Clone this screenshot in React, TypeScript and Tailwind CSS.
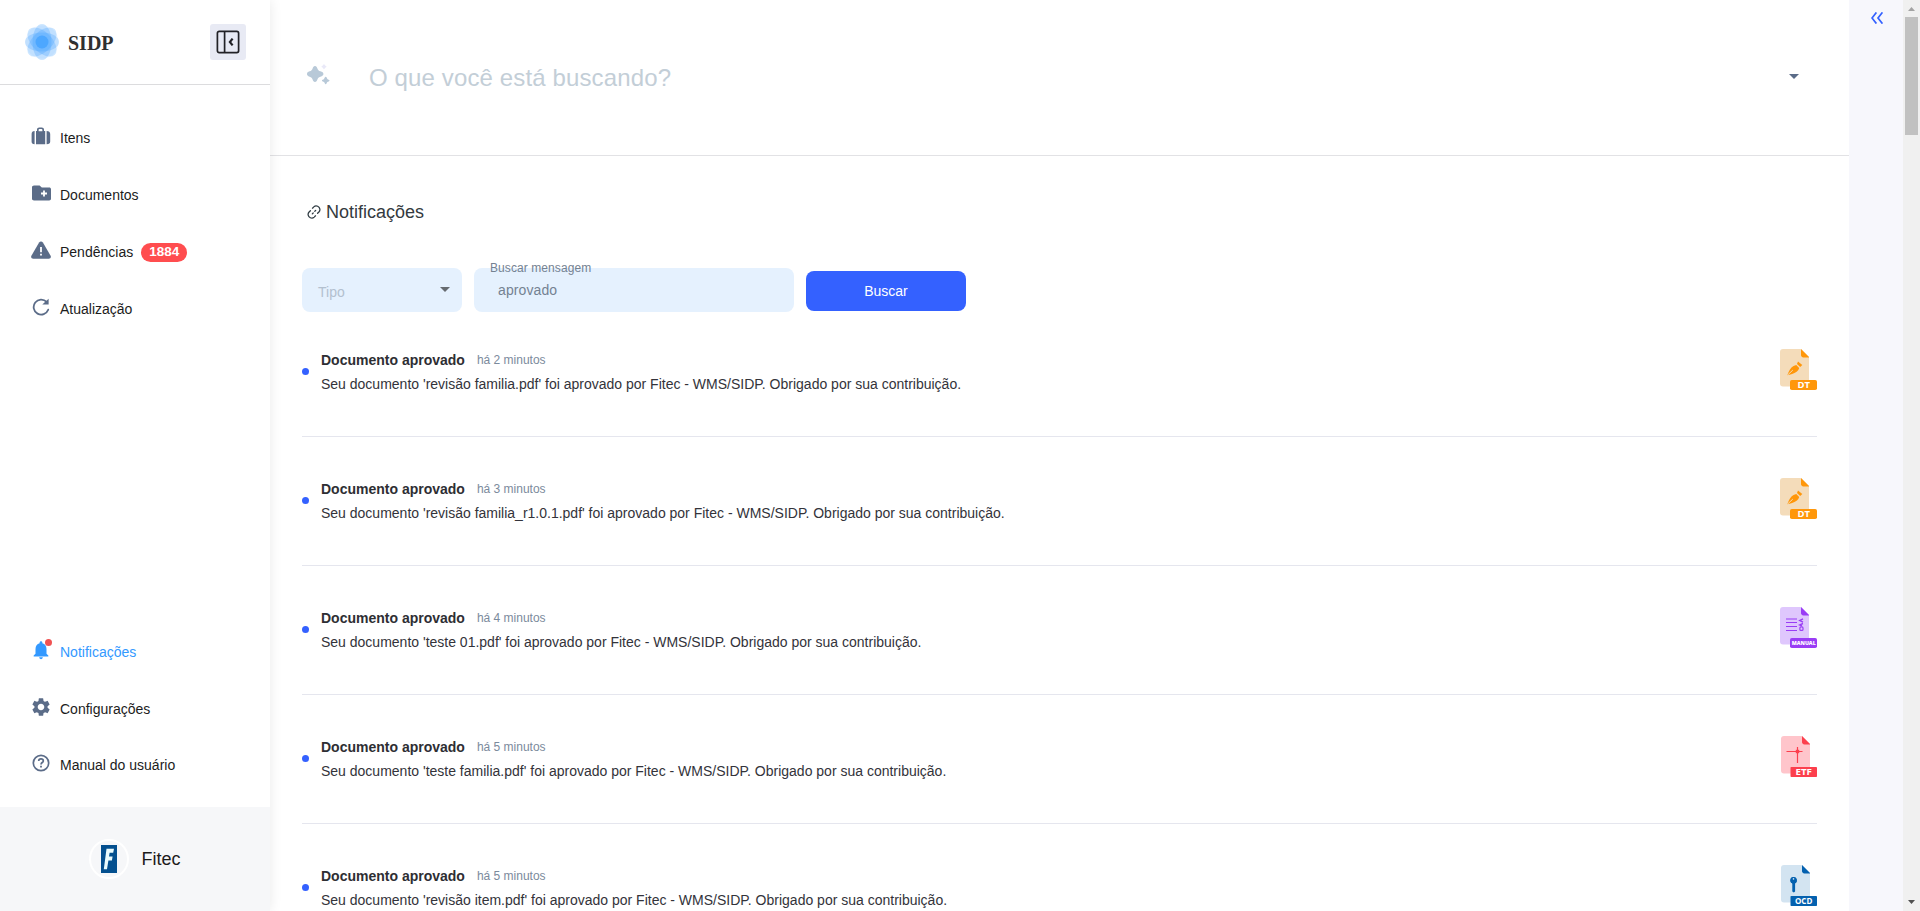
import React from "react";
import { MdNotifications, MdSettings } from "react-icons/md";

type FileKind = "DT" | "MANUAL" | "ETF" | "OCD";

const notifications: { time: string; file: string; kind: FileKind }[] = [
  { time: "há 2 minutos", file: "revisão familia.pdf", kind: "DT" },
  { time: "há 3 minutos", file: "revisão familia_r1.0.1.pdf", kind: "DT" },
  { time: "há 4 minutos", file: "teste 01.pdf", kind: "MANUAL" },
  { time: "há 5 minutos", file: "teste familia.pdf", kind: "ETF" },
  { time: "há 5 minutos", file: "revisão item.pdf", kind: "OCD" },
];

function Logo() {
  return (
    <svg width="34" height="36" viewBox="0 0 34 36" fill="#3a9eff">
      <g fillOpacity="0.26">
        <ellipse cx="17" cy="18" rx="9.500" ry="18" />
        <ellipse cx="17" cy="18" rx="10" ry="18" transform="rotate(45 17 18)" />
        <ellipse cx="17" cy="18" rx="17" ry="9.500" />
        <ellipse cx="17" cy="18" rx="10" ry="18" transform="rotate(-45 17 18)" />
        <circle cx="17" cy="18" r="16.500" fillOpacity="0.08" />
      </g>
      <circle cx="17" cy="18" r="6.500" fillOpacity="0.65" />
    </svg>
  );
}

function ToggleIcon() {
  return (
    <svg width="24" height="24" viewBox="0 0 24 24" fill="none" stroke="#222226" strokeWidth="1.700">
      <rect x="1.400" y="1.400" width="21.200" height="21.200" rx="1.800" />
      <path d="M8.600 1.400v21.200" />
      <path d="M16.600 8.600L13.900 12l2.700 3.400" strokeWidth="2.200" />
    </svg>
  );
}

function SuitcaseIcon() {
  return (
    <svg width="20" height="18" viewBox="0 0 20 18" fill="#5b6c88">
      <path
        d="M6 4V2.600C6 1.300 7 .400 8.200 .400h2.600C12 .400 13 1.300 13 2.600V4h1.200v13.200H5V4zM7.600 4.200h3.800V3c0-.600-.300-.900-.900-.900h-2c-.600 0-.9.300-.9.900z"
        fillRule="evenodd"
      />
      <path d="M3.600 4v13.200C1.500 17.200.6 16.400.6 14.600V7C.6 5 1.600 4 3.600 4zM15.600 4v13.200c2.500 0 3.600-.8 3.600-2.600V7c0-2-1.300-3-3.600-3z" />
    </svg>
  );
}

function FolderIcon() {
  return (
    <svg width="19" height="16" viewBox="0 0 19 16">
      <path d="M2 .500h5.600l2.200 2H17.200c1 0 1.800.700 1.800 1.700v9.600c0 1-.800 1.700-1.800 1.700H2c-1.100 0-2-.700-2-1.700V2.300C0 1.200.900.500 2 .500z" fill="#5b6c88" />
      <path d="M12 5.500v6M9 8.500h6" stroke="#fff" strokeWidth="1.800" />
    </svg>
  );
}

function WarningIcon() {
  return (
    <svg width="20" height="18" viewBox="0 0 20 18">
      <path d="M8.100 1.600c.9-1.500 2.900-1.500 3.800 0l7.700 13.100c.8 1.500-.200 3.100-1.900 3.100H2.300c-1.700 0-2.700-1.600-1.900-3.100z" fill="#5b6c88" />
      <path d="M10 6v5.300M10 12.700v1.900" stroke="#fff" strokeWidth="1.800" />
    </svg>
  );
}

function RefreshIcon() {
  return (
    <svg width="18" height="18" viewBox="0 0 18 18" fill="none" stroke="#5b6c88" strokeWidth="1.800">
      <path d="M16.200 11.700A7.500 7.500 0 1 1 14.600 3.900" strokeLinecap="round" />
      <path d="M16.600.800v5.800h-6.300z" fill="#5b6c88" stroke="none" />
    </svg>
  );
}

function HelpIcon() {
  return (
    <svg width="18" height="18" viewBox="0 0 18 18" fill="none" stroke="#5b6c88">
      <circle cx="9" cy="9" r="7.700" strokeWidth="1.700" />
      <path d="M6.700 7.100c0-1.400 1-2.200 2.300-2.200s2.300.8 2.300 2c0 1.600-2.300 1.700-2.300 3.600" strokeWidth="1.700" />
      <path d="M9 11.800v1.800" strokeWidth="1.800" />
    </svg>
  );
}

function SparkleIcon() {
  return (
    <svg width="24" height="22" viewBox="0 0 24 22" fill="#b8c9d8">
      <path d="M8 2c1.300 0 1.900.9 2.400 2.400.6 1.700 1.200 2.300 3 2.900 2 .6 3 1.400 3 2.700s-1 2.100-3 2.700c-1.800.6-2.400 1.200-3 2.900C9.900 17.100 9.300 18 8 18s-1.900-.9-2.400-2.400c-.6-1.700-1.200-2.300-3-2.900C.8 12.100 0 11.300 0 10s.8-2.100 2.600-2.700c1.800-.6 2.400-1.200 3-2.900C6.100 2.900 6.700 2 8 2z" />
      <path d="M18.700 12.800c.9 0 1.100 1.500 1.700 2.100s2.100.7 2.100 1.600-1.500 1-2.100 1.600-.8 2.200-1.700 2.200-1.100-1.600-1.700-2.200-2.100-.7-2.100-1.600 1.500-1 2.100-1.600.8-2.100 1.700-2.100z" />
      <path d="M17 .2c.6 0 .8 1 1.200 1.400s1.300.6 1.300 1.100-1 .8-1.300 1.100-.6 1.400-1.200 1.400-.8-1-1.200-1.400-1.300-.5-1.300-1.100 1-.7 1.300-1.100.6-1.400 1.200-1.400z" fill="#e9e9f8" />
    </svg>
  );
}

function LinkIcon() {
  return (
    <svg width="14" height="14" viewBox="0 0 14 14" fill="none" stroke="#2f3b42" strokeWidth="1.250" strokeLinecap="round">
      <path d="M5.500 3.200l1.300-1.300a3.500 3.500 0 0 1 3.900-.6c2.400 1.100 2.900 3.900 1.200 5.700l-1.300 1.300" />
      <path d="M8.500 10.800l-1.300 1.300a3.500 3.500 0 0 1-3.900.6C.9 11.600.4 8.800 2.100 7l1.300-1.300" />
      <path d="M5.300 8.900l.9-.9M7.800 6.300l.9-.9" />
    </svg>
  );
}

const palette: Record<FileKind, { light: string; dark: string }> = {
  DT: { light: "#f4dcba", dark: "#ff970a" },
  MANUAL: { light: "#dfc7fd", dark: "#9a3df5" },
  ETF: { light: "#ffc5cb", dark: "#fc3f4d" },
  OCD: { light: "#d3e4f1", dark: "#0461af" },
};

function FileIcon({ kind }: { kind: FileKind }) {
  const { light, dark } = palette[kind];
  const narrow = kind === "ETF" || kind === "OCD";
  return (
    <svg className="shrink-0" width="37" height="42" viewBox="0 0 37 42">
      <g transform={narrow ? "translate(1 0)" : undefined}>
        <path d="M3 0h18l8 8v26a3.500 3.500 0 0 1-3.500 3.500H3A3 3 0 0 1 0 34.500V3a3 3 0 0 1 3-3z" fill={light} />
        <path d="M21 0v5.500A2.500 2.500 0 0 0 23.500 8.500H29V8z" fill={dark} />
        {kind === "DT" && (
          <g>
            <path d="M7.300 26.300c1-2.700 2.200-5.600 4.200-7.800 1.200-1.200 2.800-1.900 4.800-2.500l2.900 3c-.6 1.600-1.400 2.900-2.600 3.800-2.500 1.600-6.400 2.900-9.300 3.500z" fill={dark} />
            <path d="M17 14.900l1-2.500 4.300 3.600-2.100 2z" fill={dark} />
            <path d="M7.300 26.300l5.500-5.200" stroke={light} strokeWidth="1" />
          </g>
        )}
        {kind === "MANUAL" && (
          <g stroke={dark} strokeWidth="1.200" fill="none">
            <path d="M6 12h11M6 15.500h11M6 19.500h11M6 23.500h11" />
            <path d="M23 11.800l-3.300 1.700 3.300 1.700M23 16.500l-3.300 1.400 2.200 1" strokeWidth="1.400" />
            <rect x="19.900" y="19.900" width="3.100" height="3.500" rx="1" strokeWidth="1.200" />
          </g>
        )}
        {kind === "ETF" && (
          <g stroke={dark} fill="none">
            <path d="M5.500 15.500h16M16.500 11v16" strokeWidth="1.200" />
            <rect x="14.800" y="13.800" width="3.400" height="3.400" fill={dark} stroke="none" />
          </g>
        )}
        {kind === "OCD" && (
          <g>
            <path d="M12.500 12a3.400 3.400 0 0 1 1.600 6.400V26.500L12.800 27.400 11.300 26.500v-8.100a3.400 3.400 0 0 1 1.200-6.400z" fill={dark} />
            <circle cx="12.500" cy="15.200" r="3.200" fill={dark} />
            <circle cx="12.500" cy="13.900" r="0.800" fill={light} />
          </g>
        )}
      </g>
      <rect x={narrow ? 10.500 : 10} y="31" width={narrow ? 26.500 : 27} height="10" rx={narrow ? 0.800 : 1.800} fill={dark} />
      <text
        x="23.700"
        y={kind === "MANUAL" ? 38.100 : 38.900}
        textAnchor="middle"
        fontFamily="Open Sans, sans-serif"
        fontWeight={kind === "MANUAL" ? 800 : 700}
        fontSize={kind === "MANUAL" ? 5.700 : 8}
        textLength={kind === "MANUAL" ? 24 : kind === "DT" ? 12.500 : kind === "ETF" ? 16.500 : 17.500}
        lengthAdjust="spacingAndGlyphs"
        fill="#fff"
      >
        {kind}
      </text>
    </svg>
  );
}

function Caret({ className, color }: { className: string; color: string }) {
  return (
    <svg className={className} width="10" height="5" viewBox="0 0 10 5">
      <path d="M0 0h10L5 5z" fill={color} />
    </svg>
  );
}

interface NavItemProps {
  icon: React.ReactNode;
  label: string;
  active?: boolean;
  children?: React.ReactNode;
}

function NavItem({ icon, label, active, children }: NavItemProps) {
  return (
    <div className="flex h-[57px] items-center pl-[30px]">
      <span className="relative mr-[8px] flex h-[24px] w-[22px] items-center justify-center pb-[4px] text-[#5b6c88]">{icon}</span>
      <span className={active ? "text-sm text-[#3399ff]" : "text-sm text-[#1c1c1c]"}>{label}</span>
      {children}
    </div>
  );
}

function Sidebar() {
  return (
    <aside className="relative z-10 flex w-[270px] shrink-0 flex-col bg-white shadow-[0_0_12px_rgba(0,0,0,0.090)]">
      <div className="flex h-[85px] shrink-0 items-center border-b border-[#dcdcde] pr-6 pl-[25px]">
        <Logo />
        <span className="ml-[9px] grow pt-px font-['Liberation_Serif',serif] text-xl font-bold text-[#303030]">SIDP</span>
        <button className="flex size-9 items-center justify-center rounded-[3px] bg-[#e8eaf4]">
          <ToggleIcon />
        </button>
      </div>
      <nav className="mt-6 flex flex-col">
        <NavItem label="Itens" icon={<SuitcaseIcon />} />
        <NavItem label="Documentos" icon={<FolderIcon />} />
        <NavItem label="Pendências" icon={<WarningIcon />}>
          <span className="mt-px ml-2 flex h-[19px] w-[46px] items-center justify-center rounded-full bg-[#ff4d4f] text-[13.5px] font-bold text-white">1884</span>
        </NavItem>
        <NavItem label="Atualização" icon={<RefreshIcon />} />
      </nav>
      <nav className="mt-auto mb-[14px] flex flex-col *:last:h-14">
        <NavItem
          active
          label="Notificações"
          icon={
            <>
              <MdNotifications size={22} className="text-[#3399ff]" />
              <span className="absolute top-[-1px] right-0 size-[7px] rounded-full bg-[#f05252]" />
            </>
          }
        />
        <NavItem label="Configurações" icon={<MdSettings size={22} />} />
        <NavItem label="Manual do usuário" icon={<HelpIcon />} />
      </nav>
      <div className="flex h-[104px] shrink-0 items-center bg-[#f6f7f9] pl-[89px]">
        <span className="flex size-10 items-center justify-center rounded-full border-2 border-white">
          <svg width="16" height="28" viewBox="0 0 16 29" preserveAspectRatio="none">
            <rect width="16" height="29" fill="#04508f" />
            <path d="M5.500 4H13l-.8 4H8.600l-.6 4h3.600l-.7 4H7.400L6 25H2.800z" fill="#e9fbfd" />
          </svg>
        </span>
        <span className="ml-[12.5px] text-lg text-[#1c1c1c]">Fitec</span>
      </div>
    </aside>
  );
}

export default function App() {
  return (
    <div className="flex h-[911px] w-full overflow-hidden bg-white font-['Liberation_Sans',Arial,sans-serif]">
      <Sidebar />
      <main className="flex grow flex-col">
        <div className="flex h-[156px] shrink-0 items-center border-b border-[#e2e2e5] pr-[50px] pl-[37px]">
          <span className="mb-[6px]">
            <SparkleIcon />
          </span>
          <span className="ml-[38px] grow text-2xl tracking-[0.13px] text-[#c3ced7]">O que você está buscando?</span>
          <Caret className="mb-[2px]" color="#5b6c88" />
        </div>
        <section className="flex flex-col pr-8 pl-8">
          <h1 className="mt-[42px] flex h-7 items-center pl-[5px] text-lg text-[#343a40]">
            <LinkIcon />
            <span className="ml-[5px]">Notificações</span>
          </h1>
          <form className="mt-[42px] flex items-center gap-3">
            <div className="flex h-11 w-40 items-center justify-between rounded-lg bg-[#e5f1fe] pr-[12.5px] pl-4">
              <span className="pt-1 text-sm text-[#b3c0cf]">Tipo</span>
              <Caret className="mb-px" color="#666b70" />
            </div>
            <div className="relative flex h-11 w-80 items-center rounded-lg bg-[#e5f1fe] pl-6">
              <span className="absolute top-[-8px] left-4 text-xs tracking-[0.08px] text-[#748292]">Buscar mensagem</span>
              <span className="text-sm tracking-[0.1px] text-[#748292]">aprovado</span>
            </div>
            <button type="button" className="mt-[2px] h-10 w-40 rounded-lg bg-[#3461ff] text-sm text-white">
              Buscar
            </button>
          </form>
          <ul className="flex flex-col">
            {notifications.map((n) => (
              <li key={n.file} className="flex h-[129px] shrink-0 items-start border-b border-[#e5e6ee] pt-[41px] first:h-[125px] first:pt-[37px]">
                <span className="mt-[19px] size-[7px] shrink-0 rounded-full bg-[#3461ff]" />
                <div className="ml-3 grow pt-px">
                  <div className="flex h-5 items-center">
                    <span className="text-sm font-bold text-[#2e2e33]">Documento aprovado</span>
                    <span className="ml-3 text-xs text-[#7b8a9c]">{n.time}</span>
                  </div>
                  <p className="mt-1 text-sm text-[#33333a]">
                    {`Seu documento '${n.file}' foi aprovado por Fitec - WMS/SIDP. Obrigado por sua contribuição.`}
                  </p>
                </div>
                <FileIcon kind={n.kind} />
              </li>
            ))}
          </ul>
        </section>
      </main>
      <aside className="flex w-[54px] shrink-0 justify-center bg-[#f7f7fc] pt-3 pl-[2px]">
        <svg width="12" height="12" viewBox="0 0 12 12" fill="none" stroke="#3461ff" strokeWidth="1.700">
          <path d="M5.400.4L1 6l4.400 5.600M11.400.4L7 6l4.400 5.600" />
        </svg>
      </aside>
      <div className="flex w-[17px] shrink-0 flex-col items-center bg-[#f0f0f0]">
        <svg width="17" height="17" viewBox="0 0 17 17">
          <path d="M5 11h7L8.500 7z" fill="#a3a3a3" />
        </svg>
        <div className="h-[118px] w-[13px] bg-[#c1c1c1]" />
        <svg className="mt-auto" width="17" height="17" viewBox="0 0 17 17">
          <path d="M5 6h7l-3.500 4z" fill="#505050" />
        </svg>
      </div>
    </div>
  );
}
